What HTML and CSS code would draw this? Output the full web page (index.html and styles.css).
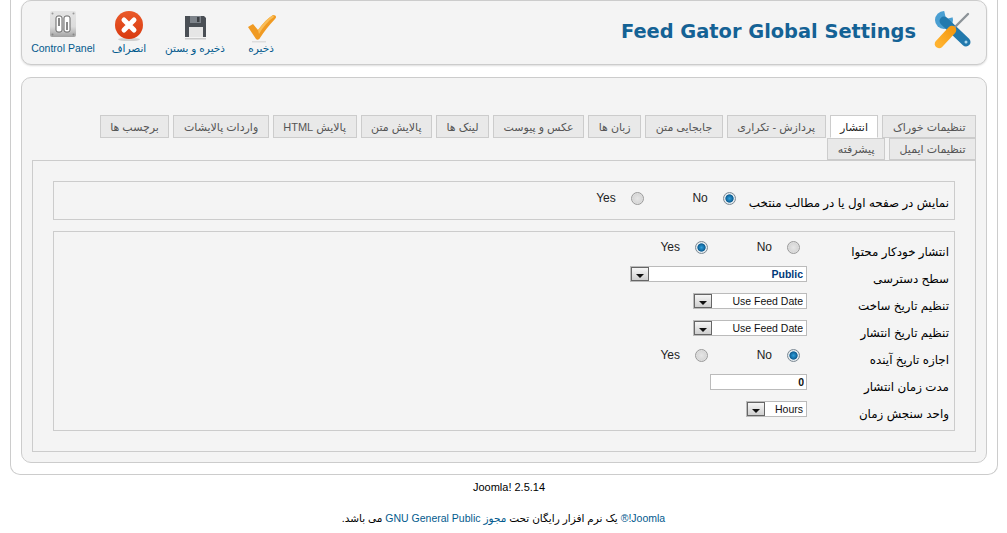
FILE: index.html
```html
<!DOCTYPE html>
<html lang="fa" dir="rtl">
<head>
    <meta charset="UTF-8">
    <title>Feed Gator Global Settings</title>
    <link rel="stylesheet" href="styles.css">
</head>
<body>
    <div class="wrapper">
        <!-- Toolbar -->
        <div class="toolbar-box">
            <div class="page-title">
                <svg class="title-icon" width="40" height="40" viewBox="0 0 40 40">
                    <defs>
                        <linearGradient id="orange" x1="0" y1="1" x2="1" y2="0"><stop offset="0" stop-color="#ffb22e"/><stop offset="1" stop-color="#f49a12"/></linearGradient>
                    </defs>
                    <circle cx="11" cy="10" r="9" fill="#4a9fd2"/>
                    <path d="M11 0 L20 -2 L21 7 L13 9 Z" fill="#f4f4f4"/>
                    <path d="M11 11 L33 32" stroke="#2279ad" stroke-width="9" stroke-linecap="round"/>
                    <circle cx="33" cy="32" r="1.5" fill="#a8d6ee"/>
                    <path d="M18 21 L35 4" stroke="#8c9398" stroke-width="2.4" stroke-linecap="round"/>
                    <path d="M6 34 L19 20" stroke="url(#orange)" stroke-width="8.5" stroke-linecap="round"/>
                </svg>
                <h1>Feed Gator Global Settings</h1>
            </div>
            <div class="toolbar">
                <a class="tool" href="#">
                    <svg width="32" height="32" viewBox="0 0 32 32">
                        <path d="M3 16 L8 13 L13 19 C18 12 23 7 28 4 C31 4 32 6 30 8 C24 14 19 21 15 27 C14 29 12 29 11 28 Z" fill="#f09a22"/>
                        <path d="M13 19 C18 12 23 7 28 4 L29 6 C23 10 18 16 14 23 Z" fill="#f9bd58"/>
                        <rect x="7" y="30" width="14" height="1.5" fill="#ddd"/>
                    </svg>
                    <span>ذخیره</span>
                </a>
                <a class="tool" href="#">
                    <svg width="32" height="32" viewBox="0 0 32 32">
                        <path d="M6 5 H25 L27 7 V26 H6 Z" fill="#4a4f55"/>
                        <rect x="11" y="5" width="11" height="7" fill="#7d838a"/>
                        <rect x="18" y="6" width="2.5" height="5" fill="#3c4045"/>
                        <rect x="10" y="16" width="14" height="10" fill="#e6e6e6"/>
                        <rect x="6" y="27" width="21" height="1.5" fill="#ccc"/>
                    </svg>
                    <span>ذخیره و بستن</span>
                </a>
                <a class="tool" href="#">
                    <svg width="32" height="32" viewBox="0 0 32 32">
                        <defs>
                            <linearGradient id="red" x1="0" y1="0" x2="0" y2="1"><stop offset="0" stop-color="#ea5a2a"/><stop offset="1" stop-color="#d93a10"/></linearGradient>
                        </defs>
                        <ellipse cx="16" cy="28.5" rx="11" ry="1.6" fill="#d0cfce"/>
                        <circle cx="16" cy="14" r="14" fill="url(#red)"/>
                        <path d="M11 9 L21 19 M21 9 L11 19" stroke="#fff" stroke-width="5" stroke-linecap="round"/>
                    </svg>
                    <span>انصراف</span>
                </a>
                <a class="tool" href="#">
                    <svg width="32" height="32" viewBox="0 0 32 32">
                        <defs>
                            <linearGradient id="plate" x1="0" y1="0" x2="0" y2="1"><stop offset="0" stop-color="#e4e4e4"/><stop offset="0.6" stop-color="#dcdcdc"/><stop offset="1" stop-color="#a2a2a2"/></linearGradient>
                        </defs>
                        <rect x="3" y="0" width="26" height="26" rx="2" fill="url(#plate)"/>
                        <rect x="9" y="5" width="6" height="16" rx="2" fill="#fff" stroke="#666"/>
                        <rect x="17" y="5" width="6" height="16" rx="2" fill="#fff" stroke="#666"/>
                        <rect x="11" y="7" width="2" height="8" fill="#888"/>
                        <rect x="19" y="11" width="2" height="8" fill="#888"/>
                        <circle cx="5.5" cy="2.5" r="1" fill="#999"/>
                        <circle cx="26.5" cy="2.5" r="1" fill="#999"/>
                        <circle cx="5.5" cy="23.5" r="1" fill="#888"/>
                        <circle cx="26.5" cy="23.5" r="1" fill="#888"/>
                    </svg>
                    <span>Control Panel</span>
                </a>
            </div>
        </div>

        <!-- Settings -->
        <div class="content-box">
            <div class="tabs">
                <a class="tab" href="#">تنظیمات خوراک</a>
                <a class="tab active" href="#">انتشار</a>
                <a class="tab" href="#">پردازش - تکراری</a>
                <a class="tab" href="#">جابجایی متن</a>
                <a class="tab" href="#">زبان ها</a>
                <a class="tab" href="#">عکس و پیوست</a>
                <a class="tab" href="#">لینک ها</a>
                <a class="tab" href="#">پالایش متن</a>
                <a class="tab" href="#">پالایش HTML</a>
                <a class="tab" href="#">واردات پالایشات</a>
                <a class="tab" href="#">برچسب ها</a>
            </div>
            <div class="tabs second">
                <a class="tab" href="#">تنظیمات ایمیل</a>
                <a class="tab" href="#">پیشرفته</a>
            </div>
            <div class="panel">
                <div class="group group-front">
                    <label class="row-label wide">نمایش در صفحه اول یا در مطالب منتخب</label>
                    <div class="radios">
                        <label class="radio"><input type="radio" name="front" checked><span>No</span></label>
                        <label class="radio"><input type="radio" name="front"><span>Yes</span></label>
                    </div>
                </div>
                <div class="group group-form">
                    <div class="row">
                        <label class="row-label">انتشار خودکار محتوا</label>
                        <div class="radios">
                            <label class="radio"><input type="radio" name="auto"><span>No</span></label>
                            <label class="radio"><input type="radio" name="auto" checked><span>Yes</span></label>
                        </div>
                    </div>
                    <div class="row">
                        <label class="row-label">سطح دسترسی</label>
                        <div class="select select-access"><span class="value">Public</span><span class="arrow"></span></div>
                    </div>
                    <div class="row">
                        <label class="row-label">تنظیم تاریخ ساخت</label>
                        <div class="select select-date"><span class="value">Use Feed Date</span><span class="arrow"></span></div>
                    </div>
                    <div class="row">
                        <label class="row-label">تنظیم تاریخ انتشار</label>
                        <div class="select select-date"><span class="value">Use Feed Date</span><span class="arrow"></span></div>
                    </div>
                    <div class="row">
                        <label class="row-label">اجازه تاریخ آینده</label>
                        <div class="radios">
                            <label class="radio"><input type="radio" name="future" checked><span>No</span></label>
                            <label class="radio"><input type="radio" name="future"><span>Yes</span></label>
                        </div>
                    </div>
                    <div class="row">
                        <label class="row-label">مدت زمان انتشار</label>
                        <input class="text-input" type="text" value="0">
                    </div>
                    <div class="row">
                        <label class="row-label">واحد سنجش زمان</label>
                        <div class="select select-unit"><span class="value">Hours</span><span class="arrow"></span></div>
                    </div>
                </div>
            </div>
        </div>
    </div>

    <div class="footer">
        <p class="version">Joomla! 2.5.14</p>
        <p class="license"><a href="#">Joomla!®</a> یک نرم افزار رایگان تحت <a href="#">مجوز GNU General Public</a> می باشد.</p>
    </div>
</body>
</html>
```

FILE: styles.css
```css
* {
    box-sizing: border-box;
}
html, body {
    margin: 0;
    height: 533px;
    overflow: hidden;
}
body {
    font-family: "Liberation Sans", "DejaVu Sans", sans-serif;
    font-size: 11px;
    background-color: #fff;
    color: #000;
}
a {
    text-decoration: none;
    color: #025a8d;
}
.wrapper {
    height: 475px;
    margin: 0 9px 0 10px;
    padding: 0 10px 0 10px;
    border: 1px solid #ccc;
    border-top: none;
    border-radius: 0 0 10px 10px;
}
.toolbar-box {
    display: flex;
    justify-content: space-between;
    align-items: flex-start;
    height: 65px;
    background-color: #f4f4f4;
    border: 1px solid #ccc;
    border-radius: 10px;
    box-shadow: 0 1px 2px #ddd;
}
.page-title {
    display: flex;
    align-items: center;
    gap: 17px;
    margin: 9px 13px 0 0;
}
.page-title h1 {
    margin: 0;
    padding-top: 2px;
    font-family: "DejaVu Sans", sans-serif;
    font-size: 19.4px;
    font-weight: bold;
    color: #146295;
}
.toolbar {
    display: flex;
    margin: 10px 0 0 8px;
}
.tool {
    display: flex;
    flex-direction: column;
    align-items: center;
    width: 66px;
    font-size: 10.5px;
    white-space: nowrap;
}
.tool svg {
    flex: none;
}
.tool span {
    margin-top: -1px;
}
.content-box {
    height: 386px;
    margin-top: 12px;
    padding: 37px 10px 10px;
    background-color: #f4f4f4;
    border: 1px solid #ccc;
    border-radius: 10px;
}
.tabs {
    display: flex;
    gap: 4px;
    height: 23px;
}
.tab {
    display: flex;
    align-items: center;
    padding: 1px 9.5px 0;
    background-color: #e9e9e9;
    border: 1px solid #ccc;
    color: #555;
    white-space: nowrap;
}
.tab.active {
    background-color: #fff;
    border-bottom-color: #fff;
    color: #222;
}
.second {
    height: 22px;
}
.panel {
    height: 292px;
    padding: 20px;
    border: 1px solid #ccc;
}
.group {
    border: 1px solid #ccc;
}
.group-front {
    display: flex;
    align-items: flex-start;
    height: 39px;
    padding-right: 5px;
}
.group-front .row-label {
    margin-top: 14px;
}
.group-front .radios {
    margin: 9px 13px 0 0;
}
.group-form {
    height: 200px;
    margin-top: 11px;
    padding: 4px 5px 0 0;
}
.row {
    display: flex;
    align-items: flex-start;
    height: 27px;
}
.row-label {
    width: 131px;
    padding-top: 9px;
    font-size: 11.9px;
    white-space: nowrap;
}
.row-label.wide {
    width: auto;
    padding-top: 0;
}
.radios {
    display: flex;
    margin-top: 4px;
}
.radio {
    display: flex;
    align-items: center;
    gap: 15px;
    width: 92px;
    font-size: 12px;
    color: #222;
}
.row .radios {
    margin-right: 18px;
}
.radio input {
    appearance: none;
    width: 13px;
    height: 13px;
    margin: 0;
    border: 1px solid #9a9a9a;
    border-radius: 50%;
    background: radial-gradient(circle, #e6e6e6 0, #d8d8d8 55%, #f4f4f4 100%);
}
.radio input:checked {
    background: radial-gradient(circle, #2f9fdc 0, #0e5f94 48%, #e8eef2 58%, #cfd3d6 100%);
    border-color: #7d8a94;
}
.select, .text-input {
    height: 16px;
    margin: 3px 11px 0 0;
    background-color: #fff;
    border: 1px solid #bbb;
    color: #111;
    font-family: "Liberation Sans", sans-serif;
    font-size: 10.5px;
}
.select {
    display: flex;
    justify-content: space-between;
    align-items: center;
}
.value {
    padding-right: 3px;
}
.arrow {
    display: flex;
    align-items: center;
    justify-content: center;
    width: 18px;
    height: 14px;
    background: linear-gradient(#f6f6f6, #cfcfcf);
    border: 1px solid #666;
}
.arrow::after {
    content: "";
    margin-top: 3px;
    border-top: 4px solid #111;
    border-left: 4px solid transparent;
    border-right: 4px solid transparent;
}
.select-access { width: 177px; font-weight: bold; color: #003a7a; }
.select-date { width: 114px; }
.select-unit { width: 61px; }
.text-input {
    width: 97px;
    padding: 0 2px;
    text-align: right;
    font-weight: bold;
    direction: ltr;
}
.footer {
    text-align: center;
}
.footer p {
    margin: 0;
}
.footer .version {
    margin-top: 6px;
    padding-left: 11px;
    direction: ltr;
}
.footer .license {
    margin-top: 19px;
    font-size: 10.5px;
}
```
